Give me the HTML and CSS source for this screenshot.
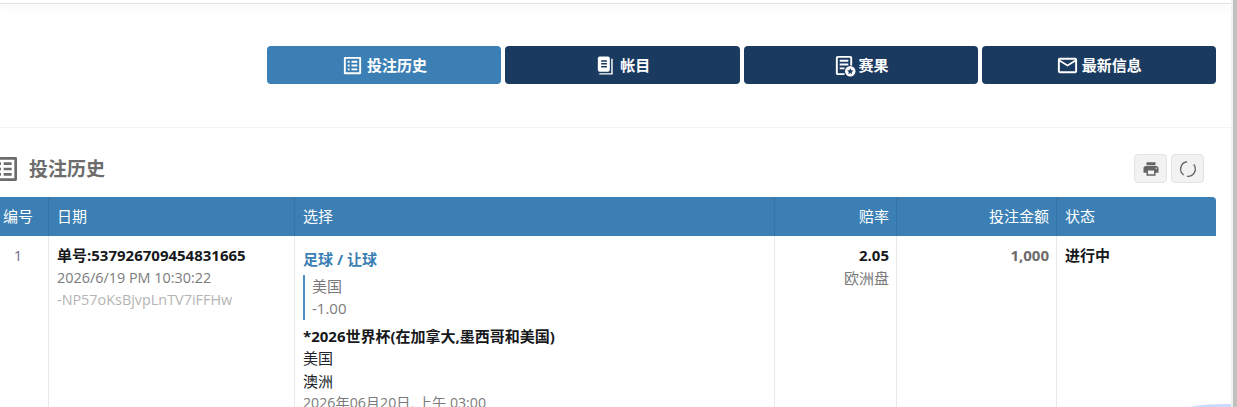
FILE: index.html
```html
<!DOCTYPE html>
<html lang="zh-CN">
<head>
  <meta charset="UTF-8" />
  <title>投注历史</title>
  <link rel="stylesheet" href="styles.css">
</head>
<body>
  <div class="page">
    <div class="content">
      <div class="topbar"></div>

      <div class="nav-area">
        <nav class="nav">
          <a class="nav-btn active" href="#">
            <svg viewBox="0 0 24 24"><path d="M19 5v14H5V5h14m1.100-2H3.900c-.5 0-.9.4-.9.9v16.200c0 .4.4.9.9.9h16.200c.4 0 .9-.5.9-.9V3.900c0-.5-.5-.9-.9-.9zM11 7h6v2h-6V7zm0 4h6v2h-6v-2zm0 4h6v2h-6zM7 7h2v2H7zm0 4h2v2H7zm0 4h2v2H7z"/></svg>
            投注历史
          </a>
          <a class="nav-btn" href="#">
            <svg viewBox="0 0 24 24"><path fill-rule="evenodd" d="M6 2.500h8.500a2 2 0 0 1 2 2V16.500a2 2 0 0 1-2 2H6a2 2 0 0 1-2-2v-12a2 2 0 0 1 2-2zM7.500 6.500V8h6V6.500zm0 3V11h6V9.500zm0 3V14h6v-1.500z"/><path d="M18 5h1.500v16.500H5.500V20H18z"/></svg>
            帐目
          </a>
          <a class="nav-btn" href="#">
            <svg viewBox="0 0 24 24"><path d="M5 2h13a2 2 0 0 1 2 2v8h-2V4H5v16h7v2H5a2 2 0 0 1-2-2V4a2 2 0 0 1 2-2zm2 4h9v2H7zm0 4h9v2H7zm0 4h5v2H7z"/><circle cx="18" cy="18" r="5.500"/><path fill="#1a3a5f" d="M18 14.800l1 2.200 2.300.2-1.800 1.500.6 2.300-2.100-1.200-2.100 1.200.6-2.300-1.800-1.500 2.300-.2z"/></svg>
            赛果
          </a>
          <a class="nav-btn" href="#">
            <svg viewBox="0 0 24 24"><path d="M20 4H4c-1.100 0-2 .9-2 2v12c0 1.100.9 2 2 2h16c1.100 0 2-.9 2-2V6c0-1.100-.9-2-2-2zm0 14H4V8l8 5 8-5v10zm-8-7L4 6h16l-8 5z"/></svg>
            最新信息
          </a>
        </nav>
      </div>

      <section class="history">
        <div class="history-head">
          <h2 class="history-title">
            <svg viewBox="0 0 24 24"><path d="M19 5v14H5V5h14m1.100-2H3.900c-.5 0-.9.4-.9.9v16.200c0 .4.4.9.9.9h16.200c.4 0 .9-.5.9-.9V3.900c0-.5-.5-.9-.9-.9zM11 7h6v2h-6V7zm0 4h6v2h-6v-2zm0 4h6v2h-6zM7 7h2v2H7zm0 4h2v2H7zm0 4h2v2H7z"/></svg>
            投注历史
          </h2>
          <div class="tools">
            <button class="tool-btn">
              <svg viewBox="0 0 24 24"><path d="M19 8H5c-1.660 0-3 1.340-3 3v6h4v4h12v-4h4v-6c0-1.660-1.340-3-3-3zm-3 11H8v-5h8v5zm3-7c-.55 0-1-.45-1-1s.45-1 1-1 1 .45 1 1-.45 1-1 1zm-1-9H6v4h12V3z"/></svg>
            </button>
            <button class="tool-btn">
              <svg class="refresh" viewBox="0 0 24 24"><path d="M10.900 4.100A8 8 0 0 0 7.300 18.500"/><path d="M18.200 7A8 8 0 0 1 10.900 19.900"/></svg>
            </button>
          </div>
        </div>

        <table class="bets">
          <colgroup>
            <col class="col-no"><col class="col-date"><col class="col-pick"><col class="col-odds"><col class="col-stake"><col>
          </colgroup>
          <thead>
            <tr>
              <th class="center">编号</th>
              <th>日期</th>
              <th>选择</th>
              <th class="right">赔率</th>
              <th class="right">投注金额</th>
              <th>状态</th>
            </tr>
          </thead>
          <tbody>
            <tr>
              <td class="center row-no">1</td>
              <td>
                <div class="strong">单号:537926709454831665</div>
                <div class="muted latin">2026/6/19 PM 10:30:22</div>
                <div class="faint latin">-NP57oKsBjvpLnTV7iFFHw</div>
              </td>
              <td class="pick">
                <div class="sport">足球 / 让球</div>
                <div class="quote">
                  <div>美国</div>
                  <div>-1.00</div>
                </div>
                <div class="strong">*2026世界杯(在加拿大,墨西哥和美国)</div>
                <div>美国</div>
                <div>澳洲</div>
                <div class="muted latin">2026年06月20日, 上午 03:00</div>
              </td>
              <td class="right">
                <div class="strong">2.05</div>
                <div class="muted">欧洲盘</div>
              </td>
              <td class="right stake">1,000</td>
              <td class="strong">进行中</td>
            </tr>
          </tbody>
        </table>
      </section>
    </div>
    <div class="scrollbar"></div>
    <div class="chat-edge"></div>
  </div>
</body>
</html>
```

FILE: styles.css
```css
html, body {
  margin: 0;
  padding: 0;
  height: 100%;
  overflow: hidden;
}

body {
  font-family: "Open Sans", "Noto Sans CJK SC", sans-serif;
  font-size: 15px;
  line-height: 22.5px;
  color: #212529;
  background: #fff;
}

.page {
  display: flex;
  height: 407px;
  overflow: hidden;
  position: relative;
}

.content {
  flex: 1;
  min-width: 0;
}

.scrollbar {
  width: 6px;
  background: linear-gradient(to right, #f1f1f1 2px, #c1c1c1 2px);
}

.chat-edge {
  position: absolute;
  left: 1185px;
  top: 404px;
  width: 46px;
  height: 20px;
  background: #ccd9ff;
  border-top-left-radius: 40px 6px;
}

.topbar {
  height: 3px;
  border-bottom: 1px solid #e2e2e2;
  box-shadow: 0 3px 8px rgba(0,0,0,0.06);
}

.nav-area {
  height: 124px;
  padding: 42px 15px 0 267px;
  box-sizing: border-box;
  border-bottom: 1px solid #f3f3f3;
}

.nav {
  display: grid;
  grid-template-columns: repeat(4, 1fr);
  gap: 4px;
}

.nav-btn {
  height: 38px;
  display: flex;
  align-items: center;
  justify-content: center;
  gap: 3px;
  background: #1a3a5f;
  border-radius: 4px;
  color: #fff;
  font-size: 15px;
  font-weight: 700;
  text-decoration: none;
}

.nav-btn.active {
  background: #3b7fb4;
}

.nav-btn svg {
  width: 23px;
  height: 23px;
  fill: currentColor;
}

.history {
  margin-left: -12px;
  padding-right: 15px;
}

.history-head {
  display: flex;
  justify-content: space-between;
  align-items: center;
  height: 69px;
  box-sizing: border-box;
  padding: 12px 12px 0 0;
}

.history-title {
  display: flex;
  align-items: center;
  gap: 8px;
  margin: 1px 0 0 1px;
  font-size: 19px;
  font-weight: 700;
  color: #6c6c6c;
}

.history-title svg {
  width: 32px;
  height: 32px;
  fill: currentColor;
}

.tools {
  display: flex;
  gap: 4px;
}

.tool-btn {
  width: 33px;
  height: 29px;
  padding: 0;
  display: flex;
  align-items: center;
  justify-content: center;
  background: #f2f2f2;
  border: 1px solid #e2e2e2;
  border-radius: 4px;
}

.tool-btn svg {
  width: 18px;
  height: 18px;
  fill: #666;
}

.tool-btn svg.refresh {
  width: 22px;
  height: 22px;
  fill: none;
  stroke: #666;
  stroke-width: 1.500;
}

.bets {
  width: 100%;
  table-layout: fixed;
  border-collapse: separate;
  border-spacing: 0;
}

.col-no { width: 60px; }
.col-date { width: 246px; }
.col-pick { width: 480px; }
.col-odds { width: 122px; }
.col-stake { width: 160px; }

.bets th {
  height: 39px;
  padding: 0 8px;
  box-sizing: border-box;
  background: #3b7fb4;
  color: #fff;
  font-size: 15px;
  font-weight: 400;
  text-align: left;
  border-left: 1px solid #3675a6;
}

.bets th:first-child {
  border-left: 0;
}

.bets th:last-child {
  border-top-right-radius: 4px;
}

.bets td {
  padding: 8px;
  vertical-align: top;
  border-left: 1px solid #e8e8e8;
}

.bets td:first-child {
  border-left: 0;
}

.bets .center { text-align: center; }

.bets .right {
  padding-right: 7px;
  text-align: right;
}

.row-no {
  color: #7d6b8a;
}

.strong {
  font-weight: 700;
  color: #16181b;
}

.muted {
  color: #7b7b7b;
}

.faint {
  color: #b4b4b4;
}

/* the date and order id run a little narrower than the rest of the table */
.latin {
  font-size: 14.400px;
}

.pick .latin {
  font-size: 14.200px;
}

.stake {
  font-weight: 700;
  color: #6c6c6c;
}

.sport {
  margin-top: 4px;
  margin-bottom: 4px;
  font-weight: 700;
  color: #3b7fb4;
}

.quote {
  margin-bottom: 5px;
  padding-left: 7px;
  border-left: 2px solid #4f8fc7;
  color: #7b7b7b;
}
```
